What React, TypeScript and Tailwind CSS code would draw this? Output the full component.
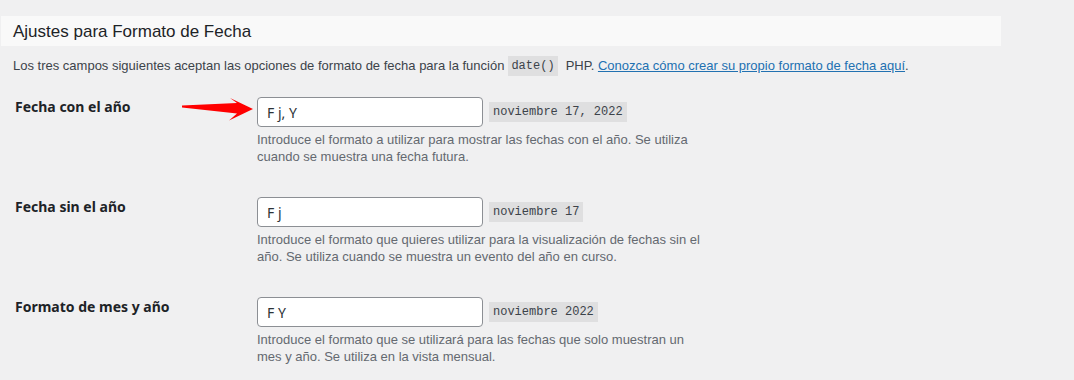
import React from "react";

const rows = [
  {
    label: "Fecha con el año",
    value: "F j, Y",
    sample: "noviembre 17, 2022",
    desc: "Introduce el formato a utilizar para mostrar las fechas con el año. Se utiliza cuando se muestra una fecha futura.",
    arrow: true,
  },
  {
    label: "Fecha sin el año",
    value: "F j",
    sample: "noviembre 17",
    desc: "Introduce el formato que quieres utilizar para la visualización de fechas sin el año. Se utiliza cuando se muestra un evento del año en curso.",
  },
  {
    label: "Formato de mes y año",
    value: "F Y",
    sample: "noviembre 2022",
    desc: "Introduce el formato que se utilizará para las fechas que solo muestran un mes y año. Se utiliza en la vista mensual.",
  },
];

const sans = '"Liberation Sans", Arial, sans-serif';
const noto = '"Noto Sans", sans-serif';
const mono = '"Liberation Mono", monospace';

export default function App() {
  return (
    <div
      className="w-[1074px] h-[380px] overflow-hidden bg-[#f0f0f1] text-[#3c434a] relative"
      style={{ fontFamily: sans }}
    >
      <div className="pt-[16px]">
        <div className="ml-[1px] w-[1000px] h-[30px] bg-[#f9f9f9] flex items-center pl-[12px]">
          <h2 className="text-[17px] font-normal text-[#1d2327] leading-none">
            Ajustes para Formato de Fecha
          </h2>
        </div>
        <p className="mt-[10px] pl-[13px] text-[13px] leading-[20px] flex items-center">
          <span>Los tres campos siguientes aceptan las opciones de formato de fecha para la función</span>
          <code
            className="ml-[4px] mr-[8px] px-[3px] h-[20px] flex items-center bg-[#dfdfe0] text-[12px] text-[#3c434a]"
            style={{ fontFamily: mono }}
          >
            date()
          </code>
          <span>PHP.&nbsp;</span>
          <a className="text-[#2271b1] underline">Conozca cómo crear su propio formato de fecha aquí</a>
          <span>.</span>
        </p>
      </div>
      <div className="mt-[21px] flex flex-col">
        {rows.map((r, i) => (
          <div key={i} className="flex h-[100px] relative">
            <div
              className="w-[257px] pl-[15px] pt-[1px] text-[14px] font-bold text-[#1d2327] leading-[18px]"
              style={{ fontFamily: noto }}
            >
              {r.label}
            </div>
            <div className="flex flex-col">
              <div className="flex items-center gap-[6px]">
                <div
                  className="w-[226px] h-[30px] bg-white border border-[#8c8f94] rounded-[4px] flex items-center pl-[9px] text-[14px] text-[#2c3338]"
                  style={{ fontFamily: noto }}
                >
                  {r.value}
                </div>
                <code
                  className="h-[20px] px-[4px] flex items-center bg-[#dfdfe0] text-[12px] text-[#3c434a]"
                  style={{ fontFamily: mono }}
                >
                  {r.sample}
                </code>
              </div>
              <p className="mt-[4px] w-[455px] text-[13px] leading-[17px] text-[#646970]">{r.desc}</p>
            </div>
            {r.arrow && (
              <svg className="absolute left-[178px] top-[-4px]" width="80" height="28" viewBox="178 92 80 28">
                <polygon
                  points="182,104.5 237,102 230,97 253,108 229,119.5 237,112.5 182,106.5"
                  fill="#ff0000"
                />
              </svg>
            )}
          </div>
        ))}
      </div>
    </div>
  );
}
